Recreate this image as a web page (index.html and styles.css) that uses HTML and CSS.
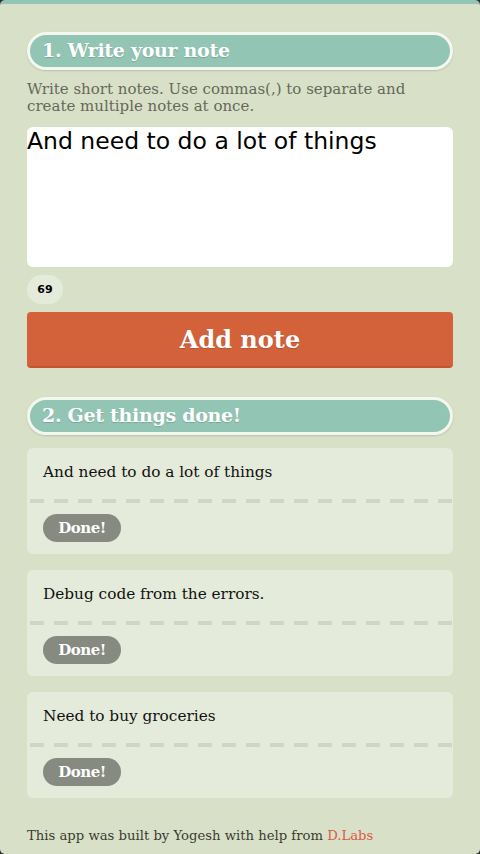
FILE: index.html
```html
<!DOCTYPE html>
<html lang="en">
<head>
    <meta charset="UTF-8">
    <meta name="viewport" content="width=device-width, initial-scale=1.0">
    <title>Notes</title>
    <link rel="stylesheet" href="styles.css">
</head>
<body>

    <div class="app">

        <!-- Step 1 -->
        <h2 class="step-title">1. Write your note</h2>
        <p class="hint">Write short notes. Use commas(,) to separate and create multiple notes at once.</p>
        <textarea class="note-input">And need to do a lot of things</textarea>
        <div class="counter">69</div>
        <button class="add-button">Add note</button>

        <!-- Step 2 -->
        <h2 class="step-title step-two">2. Get things done!</h2>

        <div class="note">
            <div class="note-text">And need to do a lot of things</div>
            <div class="note-divider"></div>
            <div class="note-actions"><button class="done-button">Done!</button></div>
        </div>

        <div class="note">
            <div class="note-text">Debug code from the errors.</div>
            <div class="note-divider"></div>
            <div class="note-actions"><button class="done-button">Done!</button></div>
        </div>

        <div class="note">
            <div class="note-text">Need to buy groceries</div>
            <div class="note-divider"></div>
            <div class="note-actions"><button class="done-button">Done!</button></div>
        </div>

        <p class="footer">This app was built by Yogesh with help from <a href="#">D.Labs</a></p>
    </div>

</body>
</html>
```

FILE: styles.css
```css
/* Notes app */
body {
    margin: 0;
    background-color: #2e2e2e;
    font-family: 'DejaVu Serif', serif;
}

.app {
    box-sizing: border-box;
    height: 854px;
    background-color: #d8e1c8;
    border-top: 4px solid #93c5b4;
    border-radius: 5px;
    padding: 28px 27px 0;
    overflow: hidden;
}

/* Section headers */
.step-title {
    box-sizing: border-box;
    height: 38px;
    margin: 0;
    padding-left: 12px;
    background-color: #92c5b4;
    border: 3px solid #f4f7ef;
    border-radius: 20px;
    box-shadow: 0 1px 2px rgba(0, 0, 0, 0.15);
    color: #fff;
    font-size: 19px;
    font-weight: bold;
    line-height: 31px;
    letter-spacing: -0.3px;
    text-shadow: 0 1px 1px rgba(0, 0, 0, 0.15);
}

.step-two {
    margin-top: 29px;
}

.hint {
    margin: 11px 0 12px;
    color: #66685a;
    font-size: 15px;
    line-height: 17px;
}

.note-input {
    display: block;
    box-sizing: border-box;
    width: 100%;
    height: 140px;
    margin: 0;
    padding: 0;
    border: none;
    border-radius: 6px;
    background-color: #fff;
    font-family: 'DejaVu Sans', sans-serif;
    font-size: 23.5px;
    line-height: 28px;
    color: #000;
    resize: none;
}

.counter {
    width: 36px;
    height: 29px;
    margin-top: 8px;
    border-radius: 15px;
    background-color: #e5ebdb;
    font-family: 'DejaVu Sans', sans-serif;
    font-size: 11px;
    font-weight: bold;
    line-height: 29px;
    text-align: center;
}

.add-button {
    display: block;
    width: 100%;
    height: 56px;
    margin-top: 8px;
    border: none;
    border-bottom: 2px solid #c2542f;
    border-radius: 4px;
    background-color: #d3623b;
    color: #fff;
    font-family: 'DejaVu Serif', serif;
    font-size: 24px;
    font-weight: bold;
    text-shadow: 0 1px 1px rgba(0, 0, 0, 0.15);
}

/* Note cards */
.note {
    margin-top: 16px;
    background-color: #e4ebda;
    border-radius: 6px;
}

.step-two + .note {
    margin-top: 13px;
}

.note-text {
    padding: 15px 16px 18px;
    font-size: 15.3px;
    line-height: 18px;
    color: #111;
}

.note-divider {
    height: 4px;
    background: repeating-linear-gradient(90deg, #cfd6c4 0 14px, transparent 14px 24px);
    background-position: 3px 0;
}

.note-actions {
    padding: 11px 16px 12px;
}

.done-button {
    display: block;
    width: 78px;
    height: 28px;
    border: none;
    border-radius: 14px;
    background-color: #868a80;
    color: #fff;
    font-family: 'DejaVu Serif', serif;
    font-size: 15px;
    font-weight: bold;
    letter-spacing: -0.5px;
}

.footer {
    margin: 30px 0 0;
    font-size: 13.2px;
    color: #3b3b33;
}

.footer a {
    color: #dc5a45;
    text-decoration: none;
}
```
